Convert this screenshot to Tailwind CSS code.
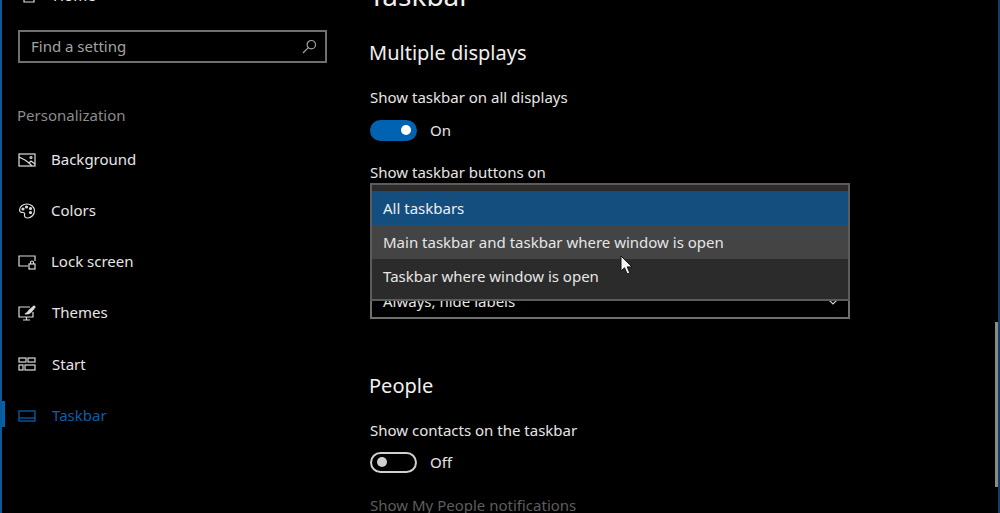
<!DOCTYPE html>
<html>
<head>
<meta charset="utf-8">
<script src="https://cdn.jsdelivr.net/npm/@tailwindcss/browser@4"></script>
</head>
<body class="bg-black">
<div class="relative w-[1000px] h-[513px] overflow-hidden bg-black flex text-[#e6e6e6] font-['Noto_Sans','Open_Sans',sans-serif] border-l-2 border-r-2 border-l-[#0a5a9c] border-r-[#123f66]">
  <!-- sidebar -->
  <aside class="w-[367px] shrink-0 flex flex-col text-[15px]">
    <div class="h-[30px] -mt-[20px] shrink-0 flex items-center pl-[18px] gap-[15px]">
      <svg class="w-[18px] h-[18px]" viewBox="0 0 18 18" fill="none" stroke="#ddd" stroke-width="1.2"><path d="M9 2 1.500 9.500M9 2l7.500 7.500M4 8v8h10V8"/></svg>
      <span>Home</span>
    </div>
    <div class="ml-[16px] mt-[20px] w-[309px] h-[33px] shrink-0 border-2 border-[#6f6f6f] flex items-center justify-between pl-[11px] pr-[8px] text-[#a3a3a3]">
      <span class="text-[15px]">Find a setting</span>
      <svg class="w-[15px] h-[15px]" viewBox="0 0 15 15" fill="none" stroke="#a3a3a3" stroke-width="1.2"><circle cx="9.300" cy="5.700" r="4.200"/><path d="M6.300 8.700 1 14"/></svg>
    </div>
    <div class="ml-[15px] mt-[41px] h-[22px] shrink-0 flex items-center text-[#8c8c8c]">Personalization</div>
    <nav class="mt-[8px] flex flex-col">
      <div class="h-[51px] flex items-center pl-[16px] gap-[15px]">
        <svg class="w-[18px] h-[16px] shrink-0" viewBox="0 0 18 16" fill="none" stroke="#dcdcdc" stroke-width="1.2"><rect x="1" y="2" width="16" height="12"/><path d="M1 5l6 3 4 3 3 3M11 11l2-2 4 3"/><circle cx="13" cy="5.500" r="1"/></svg>
        <span>Background</span>
      </div>
      <div class="h-[51px] flex items-center pl-[16px] gap-[15px]">
        <svg class="w-[18px] h-[18px] shrink-0" viewBox="0 0 18 18" fill="none" stroke="#dcdcdc" stroke-width="1.2"><path d="M9 2C5 2 1.500 4.500 1.500 8c0 2 2 2.500 3.500 2.500S7 11.500 6.500 13c-.4 1.500 1 3 3 3 4 0 7-3.500 7-7.500C16.500 5 13 2 9 2Z"/><circle cx="5" cy="7" r="1" fill="#dcdcdc"/><circle cx="8.500" cy="5" r="1" fill="#dcdcdc"/><circle cx="12.500" cy="6.500" r="1" fill="#dcdcdc"/><circle cx="12.500" cy="10.500" r="1" fill="#dcdcdc"/></svg>
        <span>Colors</span>
      </div>
      <div class="h-[51px] flex items-center pl-[16px] gap-[15px]">
        <svg class="w-[18px] h-[16px] shrink-0" viewBox="0 0 18 16" fill="none" stroke="#dcdcdc" stroke-width="1.2"><path d="M10 12H1V2h16v5"/><rect x="11" y="10" width="6" height="5"/><path d="M12.500 10V8.500a1.500 1.500 0 0 1 3 0V10"/></svg>
        <span>Lock screen</span>
      </div>
      <div class="h-[51px] flex items-center pl-[16px] gap-[16px]">
        <svg class="w-[18px] h-[16px] shrink-0" viewBox="0 0 18 16" fill="none" stroke="#dcdcdc" stroke-width="1.2"><path d="M12 2H1v10h14V7M5 15h7M8.500 12v3"/><path d="M7 9c2-1 3-2 4-3.500L16 1l1 1-4 5c-1.500 1.500-3 2-6 2Z" fill="#dcdcdc"/></svg>
        <span>Themes</span>
      </div>
      <div class="h-[52px] flex items-center pl-[16px] gap-[16px]">
        <svg class="w-[18px] h-[16px] shrink-0" viewBox="0 0 18 16" fill="none" stroke="#dcdcdc" stroke-width="1.2"><rect x="1" y="2" width="7" height="4"/><rect x="10" y="2" width="7" height="4"/><rect x="1" y="9" width="4" height="5"/><rect x="7" y="9" width="10" height="5"/></svg>
        <span>Start</span>
      </div>
      <div class="relative h-[51px] flex items-center pl-[16px] gap-[16px] text-[#0a5ea8]">
        <div class="absolute -left-[2px] top-[11px] w-[5px] h-[26px] bg-[#0063b1]"></div>
        <svg class="w-[18px] h-[12px] shrink-0" viewBox="0 0 18 12" fill="none" stroke="#0a5ea8" stroke-width="1.300"><rect x="1" y="1" width="16" height="10"/><path d="M1 8h16"/></svg>
        <span>Taskbar</span>
      </div>
    </nav>
  </aside>
  <!-- content -->
  <main class="flex-1 flex flex-col">
    <div class="h-[30px] -mt-[20px] shrink-0 flex items-center text-[28px] leading-none text-[#f0f0f0]">Taskbar</div>
    <h2 class="mt-[28px] h-[30px] shrink-0 flex items-center text-[20px] text-[#f0f0f0] font-normal">Multiple displays</h2>
    <div class="ml-[1px] mt-[18px] h-[22px] shrink-0 flex items-center text-[15px]">Show taskbar on all displays</div>
    <div class="ml-[1px] mt-[11px] h-[22px] shrink-0 flex items-center gap-[13px] text-[15px]">
      <div class="w-[47px] h-[21px] rounded-full bg-[#0063b1] flex items-center justify-end pr-[6px]"><div class="w-[10px] h-[10px] rounded-full bg-white"></div></div>
      <span>On</span>
    </div>
    <div class="ml-[1px] mt-[20px] h-[22px] shrink-0 flex items-center text-[15px]">Show taskbar buttons on</div>
    <div class="relative ml-[1px]">
      <!-- combobox behind the list -->
      <div class="mt-[101px] w-[480px] h-[35px] border-2 border-[#6f6f6f] flex items-center justify-between pl-[11px] pr-[10px] text-[15px]">
        <span>Always, hide labels</span>
        <svg class="w-[10px] h-[6px]" viewBox="0 0 10 6" fill="none" stroke="#ccc" stroke-width="1.200"><path d="M1 1l4 4 4-4"/></svg>
      </div>
      <!-- open list -->
      <div class="absolute left-0 top-0 w-[480px] h-[118px] border-2 border-[#5c5c5c] bg-[#2b2b2b] flex flex-col pt-[6px] text-[15px]">
        <div class="h-[34px] shrink-0 flex items-center pl-[11px] bg-[#134e7f] text-[#eeeeee]">All taskbars</div>
        <div class="h-[34px] shrink-0 flex items-center pl-[11px] bg-[#444444]">Main taskbar and taskbar where window is open</div>
        <div class="h-[34px] shrink-0 flex items-center pl-[11px]">Taskbar where window is open</div>
      </div>
    </div>
    <h2 class="mt-[52px] h-[30px] shrink-0 flex items-center text-[20px] text-[#f0f0f0] font-normal">People</h2>
    <div class="ml-[1px] mt-[18px] h-[22px] shrink-0 flex items-center text-[15px]">Show contacts on the taskbar</div>
    <div class="ml-[1px] mt-[10px] h-[22px] shrink-0 flex items-center gap-[13px] text-[15px]">
      <div class="w-[47px] h-[21px] rounded-full border-2 border-[#d0d0d0] flex items-center pl-[5px]"><div class="w-[10px] h-[10px] rounded-full bg-[#cfcfcf]"></div></div>
      <span>Off</span>
    </div>
    <div class="ml-[1px] mt-[21px] h-[22px] shrink-0 flex items-center text-[15px] text-[#5e5e5e]">Show My People notifications</div>
  </main>
  <!-- overlay scrollbar -->
  <div class="absolute left-[993px] top-[322px] w-[3px] h-[165px] bg-[#8a8a8a]"></div>
  <!-- pointer -->
  <svg class="absolute left-[618px] top-[255px] w-[15px] h-[21px]" viewBox="0 0 15 21"><path d="M1 1v15l3.500-3.200 2.700 6.200 2.600-1.100-2.600-6H12Z" fill="#f4f4f4" stroke="#111" stroke-width="1"/></svg>
</div>
</body>
</html>
